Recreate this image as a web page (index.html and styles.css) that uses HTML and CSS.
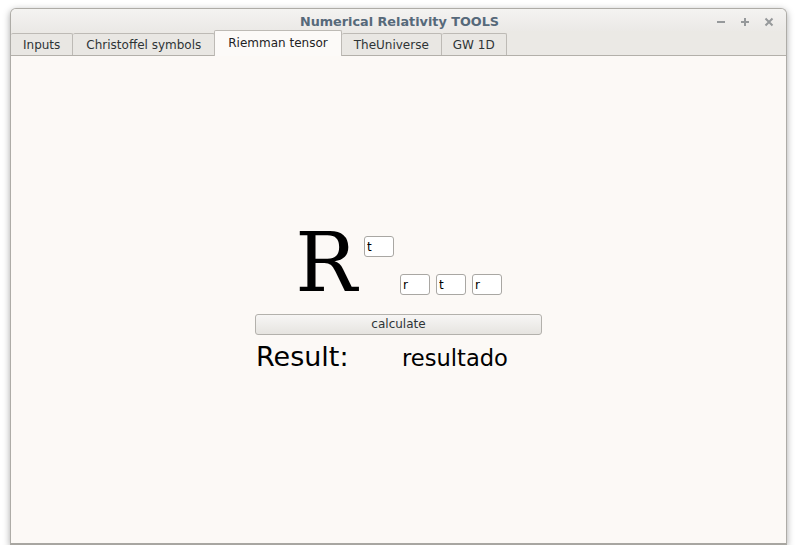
FILE: index.html
```html
<!DOCTYPE html>
<html>
<head>
<meta charset="utf-8">
<link rel="stylesheet" href="styles.css">
</head>
<body>
<div class="window">
  <div class="titlebar">
    <div class="spacer"></div>
    <div class="title">Numerical Relativity TOOLS</div>
    <div class="controls">
      <svg width="10" height="10" viewBox="0 0 10 10"><path d="M1 5H9" stroke="#96999b" stroke-width="2"/></svg>
      <svg width="10" height="10" viewBox="0 0 10 10"><path d="M1 5H9M5 1V9" stroke="#96999b" stroke-width="2"/></svg>
      <svg width="10" height="10" viewBox="0 0 10 10"><path d="M1.5 1.5L8.5 8.5M8.5 1.5L1.5 8.5" stroke="#96999b" stroke-width="2"/></svg>
    </div>
  </div>
  <div class="tabbar">
    <div class="tab">Inputs</div>
    <div class="tab wide">Christoffel symbols</div>
    <div class="tab active">Riemman tensor</div>
    <div class="tab">TheUniverse</div>
    <div class="tab narrow">GW 1D</div>
  </div>
  <div class="content">
    <div class="panel">
      <div class="tensor">
        <span class="symbol">R</span>
        <div class="indices">
          <div class="upper"><input class="idx" value="t"></div>
          <div class="lower">
            <input class="idx" value="r">
            <input class="idx" value="t">
            <input class="idx" value="r">
          </div>
        </div>
      </div>
      <button class="calc">calculate</button>
      <div class="result">
        <span class="label">Result:</span>
        <span class="value">resultado</span>
      </div>
    </div>
  </div>
</div>
</body>
</html>
```
FILE: styles.css
```css
html, body {
  margin: 0;
  padding: 0;
  background: #ffffff;
}
body {
  padding: 8px 0 0 10px;
  font-family: "DejaVu Sans", "Liberation Sans", sans-serif;
}
.window {
  width: 775px;
  height: 534px;
  border: 1px solid #aeaca7;
  border-bottom: 2px solid #a8a6a1;
  border-radius: 6px 6px 0 0;
  display: flex;
  flex-direction: column;
  box-shadow: 0 2px 7px rgba(0, 0, 0, 0.35);
  background: #ebe9e5;
  overflow: hidden;
}
.titlebar {
  height: 22px;
  display: grid;
  grid-template-columns: 1fr auto 1fr;
  align-items: center;
  background: linear-gradient(#f4f3f1, #ebe9e6);
  padding: 0 12px 0 0;
}
.title {
  font-weight: bold;
  font-size: 12.8px;
  color: #56697a;
  padding-top: 3px;
  padding-left: 14px;
}
.controls {
  display: flex;
  justify-content: flex-end;
  gap: 14px;
  padding-top: 4px;
}
.tabbar {
  height: 24px;
  display: flex;
  align-items: flex-end;
  border-bottom: 1px solid #b3b0aa;
  background: #ebe9e5;
}
.tab {
  height: 21px;
  display: flex;
  align-items: center;
  padding: 0 12px;
  font-size: 12px;
  color: #2e3436;
  background: #e9e7e3;
  border: 1px solid #bdbab5;
  border-bottom: none;
  border-left: none;
  border-radius: 2px 2px 0 0;
}
.tab.wide {
  padding: 0 13px;
}
.tab.narrow {
  padding: 0 11px;
}
.tab.active {
  height: 24px;
  margin-bottom: -1px;
  background: #fcfaf8;
  border-left: 1px solid #bdbab5;
  margin-left: -1px;
  padding: 0 13px 1px 13px;
  color: #1e2224;
}
.content {
  flex: 1;
  background: #fcf9f6;
  display: flex;
  align-items: center;
  justify-content: center;
}
.panel {
  width: 287px;
  display: flex;
  flex-direction: column;
  margin-top: -5px;
}
.tensor {
  display: flex;
  justify-content: center;
  align-items: flex-start;
}
.symbol {
  font-family: "DejaVu Serif", "Liberation Serif", serif;
  font-size: 82px;
  line-height: 82px;
  height: 82px;
  color: #000;
}
.indices {
  margin-left: 7px;
  padding-top: 14px;
  display: flex;
  flex-direction: column;
  gap: 17px;
}
.lower {
  display: flex;
  gap: 6px;
  margin-left: 36px;
}
.idx {
  width: 30px;
  height: 21px;
  box-sizing: border-box;
  margin: 0;
  border: 1px solid #a9a7a3;
  border-radius: 3px;
  background: #ffffff;
  font-family: "DejaVu Sans", sans-serif;
  font-size: 12px;
  color: #000;
  padding: 0 2px;
  outline: none;
}
.calc {
  margin-top: 10px;
  width: 287px;
  height: 21px;
  box-sizing: border-box;
  border: 1px solid #b3b1ac;
  border-radius: 3px;
  background: linear-gradient(#f7f6f5, #e6e4e0);
  font-family: "DejaVu Sans", sans-serif;
  font-size: 12px;
  color: #2e3436;
  padding: 0;
}
.result {
  margin-top: 7px;
  display: grid;
  grid-template-columns: 147px auto;
  align-items: baseline;
  line-height: 30px;
  color: #000;
}
.label {
  font-size: 27px;
  padding-left: 1px;
}
.value {
  font-size: 22.6px;
}
```
